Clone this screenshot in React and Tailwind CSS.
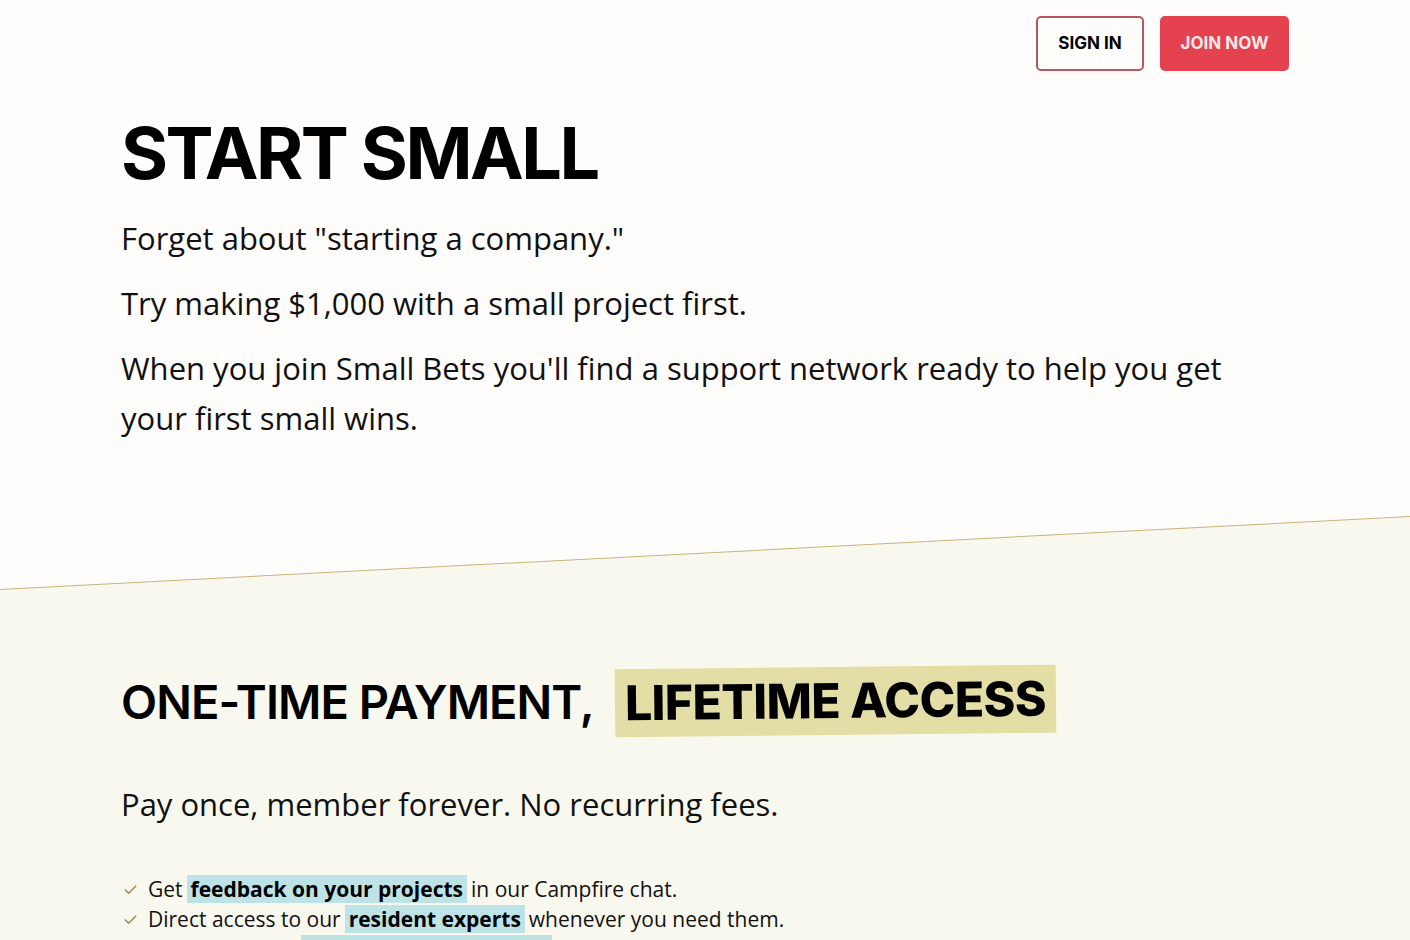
import React from 'react';

const body = "font-['Open_Sans','Noto_Sans',sans-serif]";
const display = "font-['Inter','Roboto',sans-serif]";

const Check = () => (
  <svg viewBox="0 0 16 16" className="w-[15px] h-[15px] shrink-0 ml-[2px]" fill="none" stroke="#a98a4c" strokeWidth="1.7" strokeLinecap="round" strokeLinejoin="round">
    <path d="M2.5 8.5l3.5 3.5 7.5-7.5" />
  </svg>
);

const Mark = ({ children }) => (
  <span className="bg-[#bde3e6] px-1 mx-1 font-bold text-black">{children}</span>
);

const perks = [
  { before: 'Get', mark: 'feedback on your projects', after: 'in our Campfire chat.' },
  { before: 'Direct access to our', mark: 'resident experts', after: 'whenever you need them.' },
  { before: 'Learn from our', mark: 'live events and courses', after: 'and the full recordings library.' },
];

export default function App() {
  return (
    <div className="min-h-screen bg-[#fffcfc] text-[#111] overflow-hidden">
      {/* Header */}
      <header className="max-w-[1168px] mx-auto flex justify-end gap-4 pt-4">
        <button className={`${display} h-[55px] w-[108px] rounded-[5px] border-2 border-[#b75560] text-[17px] font-bold text-black`}>
          SIGN IN
        </button>
        <button className={`${display} h-[55px] w-[129px] rounded-[5px] bg-[#e4424f] text-[17px] font-bold text-[#fde8ea]`}>
          JOIN NOW
        </button>
      </header>

      {/* Hero */}
      <section className="max-w-[1168px] mx-auto pt-[46px] pb-[73px]">
        <h1 className={`${display} text-[72px] leading-none font-bold tracking-[-0.035em] text-black`}>START SMALL</h1>
        <div className={`${body} mt-[24px] max-w-[1140px] space-y-[15px] text-[31px] leading-[50px] text-[#111]`}>
          <p>Forget about "starting a company."</p>
          <p>Try making $1,000 with a small project first.</p>
          <p>When you join Small Bets you'll find a support network ready to help you get your first small wins.</p>
        </div>
      </section>

      {/* Pricing */}
      <section className="relative pt-[151px]">
        <div className="absolute inset-0 origin-top-right -skew-y-[2.96deg] bg-[#f9f8ef] border-t border-[#c9b37f]" />
        <div className="relative max-w-[1168px] mx-auto">
          <h2 className={`${display} flex items-center leading-none text-black`}>
            <span className="text-[47px] font-semibold tracking-[-0.02em]">ONE-TIME PAYMENT,</span>
            <span className="ml-[21px] bg-[#e3dda6] px-[10px] py-[10px] text-[48px] font-extrabold tracking-[-0.01em] -rotate-[0.6deg]">LIFETIME ACCESS</span>
          </h2>
          <p className={`${body} mt-[44px] text-[31px] leading-[50px] text-[#111]`}>Pay once, member forever. No recurring fees.</p>
          <ul className={`${body} mt-[45px] text-[21px] leading-[30px] text-[#111]`}>
            {perks.map((p) => (
              <li key={p.mark} className="flex items-center gap-[10px]">
                <Check />
                <span>
                  {p.before}
                  <Mark>{p.mark}</Mark>
                  {p.after}
                </span>
              </li>
            ))}
          </ul>
        </div>
      </section>
    </div>
  );
}
